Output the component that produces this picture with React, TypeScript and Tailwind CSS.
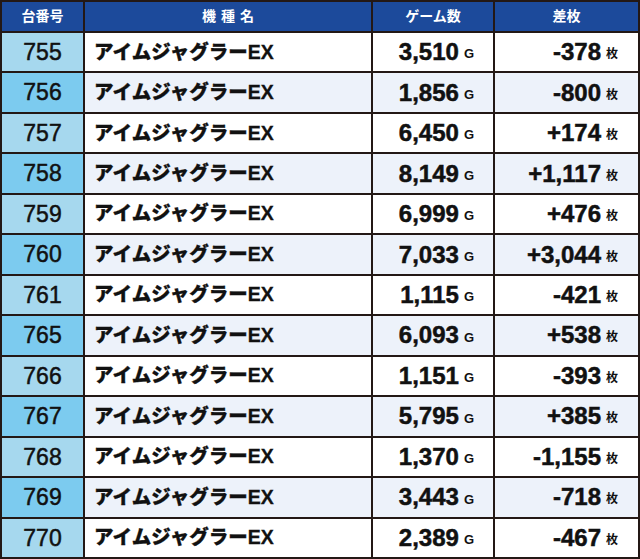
const rows = [
  { no: "755", games: "3,510", diff: "-378" },
  { no: "756", games: "1,856", diff: "-800" },
  { no: "757", games: "6,450", diff: "+174" },
  { no: "758", games: "8,149", diff: "+1,117" },
  { no: "759", games: "6,999", diff: "+476" },
  { no: "760", games: "7,033", diff: "+3,044" },
  { no: "761", games: "1,115", diff: "-421" },
  { no: "765", games: "6,093", diff: "+538" },
  { no: "766", games: "1,151", diff: "-393" },
  { no: "767", games: "5,795", diff: "+385" },
  { no: "768", games: "1,370", diff: "-1,155" },
  { no: "769", games: "3,443", diff: "-718" },
  { no: "770", games: "2,389", diff: "-467" },
];

const font = "font-['Liberation_Sans','Noto_Sans_CJK_JP',sans-serif]";

export default function App() {
  return (
    <div className={`w-[640px] h-[559px] ${font} text-[#111]`}>
      <div className="grid h-full w-full grid-cols-[81px_286px_120px_143px] grid-rows-[29px_repeat(13,minmax(0,1fr))] gap-[2px] border-2 border-[#231815] bg-[#231815]">
        {/* Header */}
        <div className="flex items-center justify-center bg-[#1c4a9b] text-[14px] font-bold text-white">台番号</div>
        <div className="flex items-center justify-center bg-[#1c4a9b] text-[14px] font-bold tracking-[0.35em] pl-[0.35em] text-white">機種名</div>
        <div className="flex items-center justify-center bg-[#1c4a9b] text-[14px] font-bold text-white">ゲーム数</div>
        <div className="flex items-center justify-center bg-[#1c4a9b] text-[14px] font-bold text-white">差枚</div>

        {rows.map((r, i) => {
          const even = i % 2 === 1;
          const cell = even ? "bg-[#edf2fa]" : "bg-white";
          return [
            <div
              key={r.no + "a"}
              className={`flex items-center justify-center text-[23px] [-webkit-text-stroke:0.5px_#111] ${even ? "bg-[#7ccbef]" : "bg-[#a6d8ee]"}`}
            >
              {r.no}
            </div>,
            <div key={r.no + "b"} className={`flex items-center pl-[9px] text-[19.5px] font-black [-webkit-text-stroke:0.3px_#111] ${cell}`}>
              アイムジャグラーEX
            </div>,
            <div key={r.no + "c"} className={`flex items-center justify-end pr-[19px] ${cell}`}>
              <span className="text-[24px] font-bold [-webkit-text-stroke:0.5px_#111]">{r.games}</span>
              <span className="ml-[5px] mt-[4px] text-[13px] font-bold">G</span>
            </div>,
            <div key={r.no + "d"} className={`flex items-center justify-end pr-[20px] ${cell}`}>
              <span className="text-[24px] font-bold [-webkit-text-stroke:0.5px_#111]">{r.diff}</span>
              <span className="ml-[5px] mt-[4px] text-[12px] font-bold">枚</span>
            </div>,
          ];
        })}
      </div>
    </div>
  );
}
